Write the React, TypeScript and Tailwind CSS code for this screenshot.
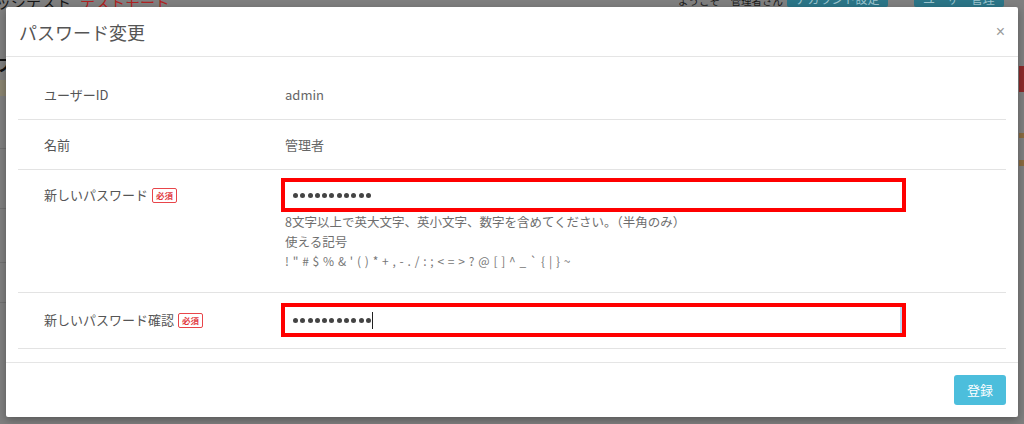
import React from "react";

const FONT = { fontFamily: '"Noto Sans CJK JP", "Noto Sans", sans-serif' };

function Dots({ count }: { count: number }) {
  return (
    <div className="flex items-center gap-[2.3px]">
      {Array.from({ length: count }).map((_, i) => (
        <span key={i} className="block w-[5px] h-[5px] rounded-full bg-[#444]" />
      ))}
    </div>
  );
}

function Badge() {
  return (
    <span className="ml-[4px] inline-flex items-center justify-center h-[15px] px-[3px] border border-[#e8454a] rounded-[2px] text-[8.5px] font-bold text-[#e23a3f] leading-none">
      必須
    </span>
  );
}

export default function App() {
  return (
    <div className="relative w-[1024px] h-[424px] overflow-hidden bg-[#7f7f7f]" style={FONT}>
      {/* dimmed page behind */}
      <div className="absolute left-[-4px] top-[-9px] text-[15px] text-[#161616] whitespace-nowrap">ッジテスト</div>
      <div className="absolute left-[80px] top-[-9px] text-[15px] text-[#b02222] whitespace-nowrap">テストモード</div>
      <div className="absolute left-[678px] top-[-7px] text-[10.5px] text-[#1a1a1a] whitespace-nowrap">ようこそ　管理者さん</div>
      <div className="absolute left-[787px] top-[-10px] w-[101px] h-[17px] bg-[#2b7587] rounded-[2px] text-[12px] text-[#9cc4ce] text-center whitespace-nowrap">アカウント設定</div>
      <div className="absolute left-[914px] top-[-10px] w-[90px] h-[17px] bg-[#2b7587] rounded-[2px] text-[12px] text-[#9cc4ce] text-center whitespace-nowrap">ユーザー管理</div>
      <div className="absolute left-[-4px] top-[52px] text-[16px] font-bold text-[#111]">フ</div>
      <div className="absolute left-0 top-[80px] w-[6px] h-[16px] bg-[#8a8470]" />
      <div className="absolute left-0 top-[148px] w-[6px] h-[1px] bg-[#707070]" />
      <div className="absolute left-0 top-[208px] w-[6px] h-[1px] bg-[#707070]" />
      <div className="absolute left-0 top-[262px] w-[6px] h-[1px] bg-[#707070]" />
      <div className="absolute left-0 top-[302px] w-[6px] h-[1px] bg-[#707070]" />
      <div className="absolute right-0 top-[66px] w-[5px] h-[26px] bg-[#8c2a2a]" />
      <div className="absolute right-0 top-[133px] w-[5px] h-[5px] bg-[#8a6a40]" />
      <div className="absolute right-0 top-[160px] w-[5px] h-[6px] bg-[#8a6a40]" />

      {/* modal */}
      <div className="absolute left-[6px] top-[7px] w-[1012px] h-[410px] bg-white rounded-[2px] shadow-[0_3px_9px_rgba(0,0,0,0.3)] flex flex-col">
        <div className="h-[50px] flex items-center justify-between pl-[13px] pr-[13px] border-b border-[#e5e5e5] shrink-0">
          <span className="text-[18px] text-[#555] leading-none">パスワード変更</span>
          <span className="text-[16px] text-[#9a9a9a] leading-none" style={{ fontFamily: '"Liberation Sans", sans-serif' }}>×</span>
        </div>

        <div className="px-[12px] pt-[13px] pb-[13px] text-[13px] text-[#555]">
          <div className="flex items-center h-[50px] border-b border-[#e3e3e3]">
            <div className="w-[263px] pl-[26px] text-[#555]">ユーザーID</div>
            <div className="pl-[4px] text-[#666]">admin</div>
          </div>
          <div className="flex items-center h-[50px] border-b border-[#e3e3e3]">
            <div className="w-[263px] pl-[26px] text-[#555]">名前</div>
            <div className="pl-[4px] text-[#666]">管理者</div>
          </div>
          <div className="flex items-start pt-[8px] pb-[21px] border-b border-[#e3e3e3]">
            <div className="w-[263px] pl-[26px] h-[34px] flex items-center">
              <span>新しいパスワード</span>
              <Badge />
            </div>
            <div className="flex flex-col">
              <div className="w-[625px] h-[34px] border-[4px] border-[#ff0000] bg-white flex items-center pl-[8px]">
                <Dots count={11} />
              </div>
              <div className="pl-[4px] text-[12.5px] leading-[19.5px] text-[#6e6e6e]">
                <div>8文字以上で英大文字、英小文字、数字を含めてください。（半角のみ）</div>
                <div>使える記号</div>
                <div className="text-[12px] text-[#777] tracking-[0.55px]">! " # $ % &amp; ' ( ) * + , - . / : ; &lt; = &gt; ? @ [ ] ^ _ ` {"{"} | {"}"} ~</div>
              </div>
            </div>
          </div>
          <div className="flex items-center h-[56px] border-b border-[#e3e3e3]">
            <div className="w-[263px] pl-[26px] flex items-center">
              <span>新しいパスワード確認</span>
              <Badge />
            </div>
            <div className="w-[625px] h-[34px] border-[4px] border-[#ff0000] bg-white flex items-center pl-[8px] shadow-[inset_-2px_0_0_#b9d7f2]">
              <Dots count={11} />
              <span className="ml-[1px] w-[1px] h-[17px] bg-[#222]" />
            </div>
          </div>
        </div>

        <div className="border-t border-[#e5e5e5] flex justify-end pr-[12px] pt-[12px]">
          <button className="w-[52px] h-[30px] bg-[#4cbedc] rounded-[3px] text-white text-[13px]">登録</button>
        </div>
      </div>
    </div>
  );
}
